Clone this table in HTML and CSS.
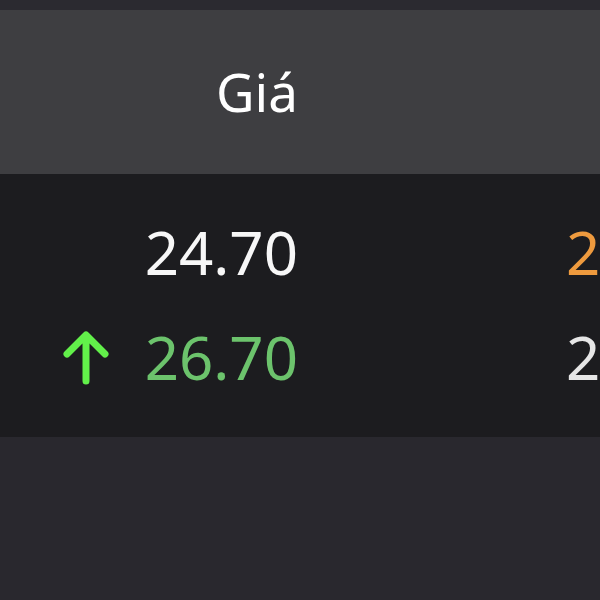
FILE: index.html
```html
<!DOCTYPE html>
<html lang="vi">
<head>
<meta charset="utf-8">
<title>Giá</title>
<link rel="stylesheet" href="styles.css">
</head>
<body>
<div class="screen">
  <div class="topbar"></div>
  <div class="header">
    <div class="col-price head-cell">Giá</div>
    <div class="col-next"></div>
  </div>
  <div class="table">
    <div class="row">
      <div class="col-price"><span class="price">24.70</span></div>
      <div class="col-next"><span class="next orange">25.00</span></div>
    </div>
    <div class="row">
      <div class="col-price">
        <svg class="arrow" width="46" height="54" viewBox="0 0 46 54" aria-hidden="true">
          <path d="M4 23 L23 4 L42 23 M23 5 L23 50" fill="none" stroke="#62f04a" stroke-width="7" stroke-linecap="round" stroke-linejoin="round"/>
        </svg>
        <span class="price green">26.70</span>
      </div>
      <div class="col-next"><span class="next light">25.20</span></div>
    </div>
  </div>
  <div class="footer"></div>
</div>
</body>
</html>
```
FILE: styles.css
```css
html, body {
  margin: 0;
  padding: 0;
  background: #29282e;
}
.screen {
  width: 600px;
  height: 600px;
  overflow: hidden;
  font-family: "Noto Sans", "Open Sans", sans-serif;
  display: flex;
  flex-direction: column;
}
.topbar {
  height: 10px;
  background: #2b2a30;
  flex: none;
}
.header {
  height: 164px;
  background: #3e3e41;
  display: grid;
  grid-template-columns: 298px 1fr;
  column-gap: 268px;
  align-items: center;
  flex: none;
}
.head-cell {
  font-size: 53px;
  line-height: 1;
  color: #ffffff;
  margin-top: -2px;
}
.col-price {
  display: flex;
  justify-content: flex-end;
  align-items: center;
  white-space: nowrap;
}
.col-next {
  white-space: nowrap;
}
.table {
  background: #1c1c1f;
  padding: 25px 0 28px;
  flex: none;
}
.row {
  display: grid;
  grid-template-columns: 298px 1fr;
  column-gap: 268px;
  align-items: center;
  height: 105px;
}
.price, .next {
  font-size: 60px;
  line-height: 1;
  color: #f7f7f7;
}
.green { color: #6cc36c; }
.orange { color: #ee9a3e; }
.light { color: #e6e6e6; }
.arrow {
  display: block;
  margin-right: 36px;
  margin-top: 2px;
}
.footer {
  flex: 1;
  background: #29282e;
}
```
